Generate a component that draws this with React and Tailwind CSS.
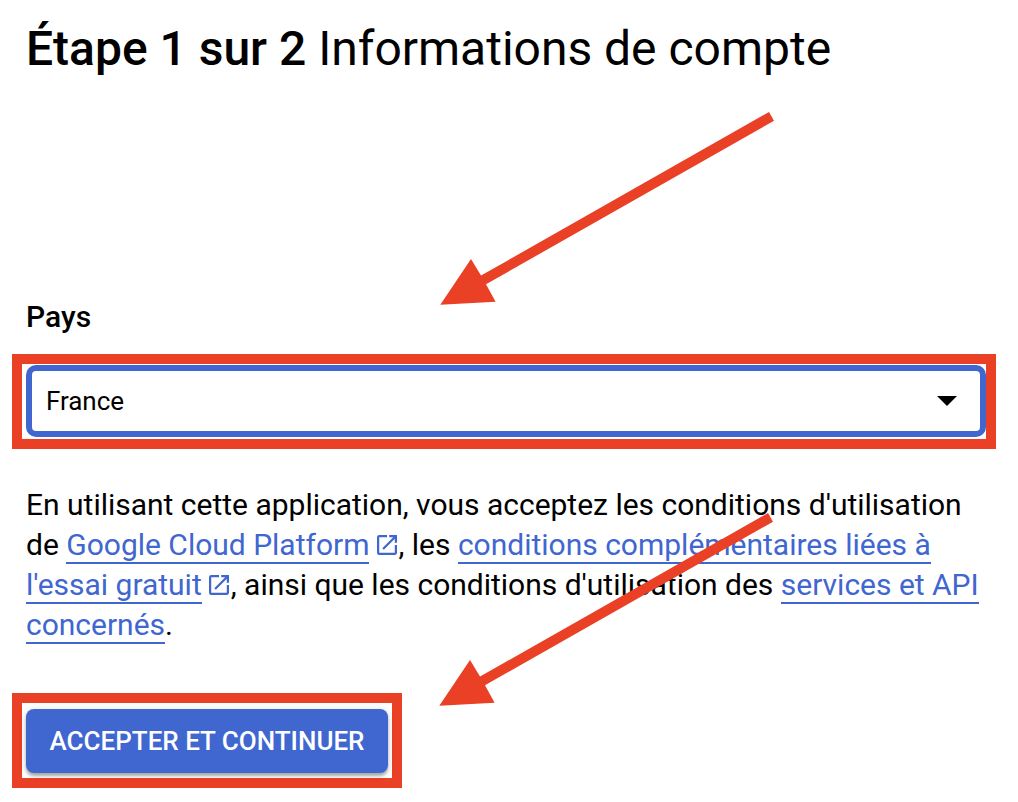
import React from 'react';

const ExternalIcon = () => (
    <svg className="inline-block w-5 h-5 ml-[7.5px] mr-[1.5px] -mt-[5px] align-middle text-[#4066d0]" viewBox="3 3 18 18" fill="currentColor">
        <path d="M19 19H5V5h7V3H5a2 2 0 0 0-2 2v14a2 2 0 0 0 2 2h14c1.1 0 2-.9 2-2v-7h-2v7zM14 3v2h3.59l-9.83 9.83 1.41 1.41L19 6.41V10h2V3h-7z" />
    </svg>
);

const TextLink = ({ children }) => (
    <a href="#" className="text-[#4066d0] border-b-2 border-[#4066d0]">{children}</a>
);

// Red arrow pointing down and to the left
const Arrow = ({ className }) => (
    <svg className={`absolute pointer-events-none ${className}`} width="340" height="200" viewBox="0 0 340 200" fill="#ea4025">
        <path d="M329 0 L334 8.7 L46 172.3 L55.6 189.8 L0.3 192.8 L31 147 L41 163.6 Z" />
    </svg>
);

export default function App() {
    return (
        <div className="relative w-[1018px] h-[802px] overflow-hidden bg-white px-3 font-['Roboto',sans-serif] text-black">
            <h1 className="pt-5 pl-[14px] text-[48px] leading-[58px] tracking-[-0.01px] whitespace-nowrap">
                <span className="font-medium">Étape 1 sur 2</span> Informations de compte
            </h1>

            <label className="block mt-[219px] pl-[14px] text-[30px] leading-10 font-medium">Pays</label>

            <div className="mt-[17px] w-[984px] h-[95px] border-[10px] border-[#ea4025] pt-px pl-1">
                <button className="flex items-center justify-between w-[960px] h-[72px] border-[6px] border-[#4066d0] rounded-[10px] pl-[14px] pr-[23px] text-[26px] tracking-[-0.05px]">
                    <span>France</span>
                    <svg width="20" height="10" viewBox="0 0 20 10" fill="currentColor">
                        <path d="M0 0h20L10 10z" />
                    </svg>
                </button>
            </div>

            <p className="mt-9 pl-[14px] text-[30px] leading-10 tracking-[-0.006px] whitespace-nowrap">
                En utilisant cette application, vous acceptez les conditions d'utilisation<br />
                de <TextLink>Google Cloud Platform</TextLink><ExternalIcon />, les <TextLink>conditions complémentaires liées à</TextLink><br />
                <TextLink>l'essai gratuit</TextLink><ExternalIcon />, ainsi que les conditions d'utilisation des <TextLink>services et API</TextLink><br />
                <TextLink>concernés</TextLink>.
            </p>

            <div className="mt-12 w-[390px] h-[95px] border-[10px] border-[#ea4025] pl-1 pt-[6px]">
                <button className="w-[362px] h-16 rounded-lg bg-[#4066d0] text-white text-[26px] font-medium shadow-[0_3px_3px_rgba(0,0,0,0.28),0_1px_8px_rgba(0,0,0,0.14)]">
                    ACCEPTER ET CONTINUER
                </button>
            </div>

            <Arrow className="left-[440px] top-[112px]" />
            <Arrow className="left-[439px] top-[513px]" />
        </div>
    );
}
